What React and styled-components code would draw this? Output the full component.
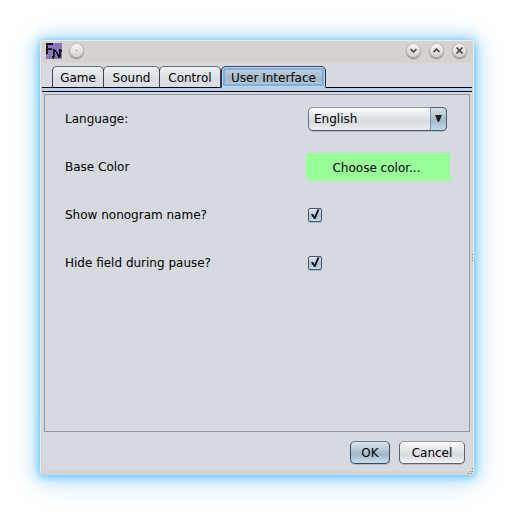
import React, { useState } from "react";
import styled, { createGlobalStyle, css } from "styled-components";

const GlobalStyle = createGlobalStyle`
  *, *::before, *::after { box-sizing: border-box; }
  body {
    margin: 0;
    background: #fff;
    color: #000;
    font: 12px/16px "DejaVu Sans", sans-serif;
  }
  button, select, input { font: inherit; color: inherit; }
`;

const Desktop = styled.div`
  display: flex;
  min-height: 100vh;
  padding: 40px;
`;

const Window = styled.main`
  position: relative;
  display: flex;
  flex: 1;
  flex-direction: column;
  min-width: 0;
  padding: 0 2px 4px;
  border-radius: 4px;
  background: #d6d2d0;
  box-shadow:
    inset 1px 1px 0 #eceae9,
    inset -1px 0 0 #eceae9,
    0 1px 6px #62caff,
    0 1px 14px 2px rgba(105, 200, 255, 0.65),
    0 3px 28px 5px rgba(130, 185, 255, 0.35);
`;

const TitleBar = styled.header`
  display: flex;
  align-items: flex-start;
  height: 23px;
  padding: 3px 5px 0 4px;
`;

const Logo = styled.svg`
  width: 16px;
  height: 16px;
  margin-right: 7px;
`;

const WindowControls = styled.div`
  display: flex;
  gap: 8px;
  margin-left: auto;
`;

const RoundButton = styled.button`
  width: 15px;
  height: 15px;
  padding: 0;
  border: 0;
  border-radius: 50%;
  background: linear-gradient(#fbfbfa, #cfccca);
  box-shadow:
    inset 0 0 0 1px rgba(120, 116, 113, 0.4),
    0 1px 1px rgba(60, 56, 54, 0.55);

  svg {
    display: block;
    width: 15px;
    height: 15px;
    fill: none;
    stroke: #3b3a39;
    stroke-width: 1.5;
  }
`;

const Content = styled.div`
  display: flex;
  flex: 1;
  flex-direction: column;
  background: #d6d9df;
`;

const TabList = styled.div`
  display: flex;
  height: 25px;
  padding: 3px 10px 0;
  background: linear-gradient(#00000f, #00000f) bottom / 100% 1px no-repeat;
`;

const Tab = styled.button`
  flex: 0 0 ${({ $width }) => $width}px;
  height: 22px;
  padding: 2px 0 0;
  margin-right: -1px;
  border: 1px solid #3d424c;
  border-top-color: #6d7177;
  border-bottom-color: #00000f;
  border-radius: 5px 5px 0 0;
  background: linear-gradient(#f0f1f3, #dcdfe4 50%, #d9dce2);
  white-space: nowrap;

  ${({ $active }) =>
    $active &&
    css`
      margin-left: 1px;
      border-color: #1e2c3c;
      border-top-color: #34485c;
      border-bottom-color: #b6d0e6;
      background: linear-gradient(#ccd7e1, #a5bacb 50%, #a3b9cb 65%, #b9d3e8);
      box-shadow: inset 0 0 0 1px #c6d6e5, inset 0 0 0 3px #7dace0;
    `}
`;

const TabStrip = styled.div`
  height: 4px;
  border-bottom: 1px solid #00000f;
  background: #bad2e6;
`;

const Panel = styled.section`
  flex: 1;
  margin: 2px 2px 0;
  padding: 0 17px 0 20px;
  border: 1px solid #8f98a1;
`;

const Row = styled.div`
  display: grid;
  grid-template-columns: minmax(0, 243px) minmax(144px, 1fr);
  align-items: center;
  height: 48px;
`;

const ComboFrame = styled.div`
  position: relative;
  width: 139px;
`;

const Combo = styled.select`
  display: block;
  width: 100%;
  height: 24px;
  padding: 0 20px 0 5px;
  appearance: none;
  border: 1px solid #6d737b;
  border-top-color: #92979d;
  border-bottom-color: #4f555d;
  border-radius: 5px;
  background: linear-gradient(#fafafb, #dcdfe4 50%, #d6d9df 60%, #eceef1);
  box-shadow: 0 1px 0 #b4b8c0;
`;

const ComboArrow = styled.svg`
  position: absolute;
  top: 0;
  right: 0;
  width: 17px;
  height: 24px;
  border: 1px solid #4a6073;
  border-left-color: #7b94aa;
  border-radius: 0 5px 5px 0;
  background: linear-gradient(#d5dfe7, #a3b8ca 55%, #c2dbee);
  pointer-events: none;
`;

const ColorButton = styled.button`
  width: 144px;
  height: 28px;
  margin-left: -2px;
  padding: 1px 3px 0 0;
  border: 0;
  background: #99ff99;
`;

const CheckFrame = styled.span`
  position: relative;
  display: flex;
  width: 14px;
  height: 14px;

  svg {
    position: absolute;
    inset: 0;
    fill: #000;
    pointer-events: none;
  }

  input:not(:checked) + svg { display: none; }
`;

const Check = styled.input`
  width: 14px;
  height: 14px;
  margin: 0;
  appearance: none;
  border: 1px solid #40566a;
  border-radius: 2px;
  background: linear-gradient(#e2eaf0, #abc0d0 60%, #c4dff2);
  box-shadow: 0 1px 0 #b4b8c0;
`;

const Footer = styled.footer`
  display: flex;
  justify-content: flex-end;
  gap: 9px;
  padding: 9px 7px 7px;
`;

const DialogButton = styled.button`
  min-width: ${({ $width }) => $width}px;
  height: 23px;
  padding: 0 8px;
  border: 1px solid #5c6067;
  border-top-color: #94989d;
  border-radius: 5px;
  background: linear-gradient(#fbfbfc, #dee0e4 50%, #d6d9df 60%, #f1f2f4);
  box-shadow: 0 1px 0 #b4b8c0;

  ${({ $primary }) =>
    $primary &&
    css`
      border-color: #34485a;
      border-top-color: #62798c;
      background: linear-gradient(#dce4eb, #b0c2d0 45%, #a3b8ca 60%, #c5dff2);
    `}
`;

const EdgeGrip = styled.svg`
  position: absolute;
  top: calc(50% - 4px);
  right: 1px;
  fill: #817e7c;
`;

const CornerGrip = styled.svg`
  position: absolute;
  right: 0;
  bottom: 1px;
  fill: #817e7c;
`;

const LOGO_PIXELS = [
  "#######.........",
  "#######.........",
  "##..............",
  "##..............",
  "##..............",
  "######..........",
  "######.##....##.",
  "##.....###...###",
  "##.....####..###",
  "##.....##.##.##.",
  "##.....##.##.##.",
  ".......##..####.",
  ".......##..####.",
  "......###...###.",
  "......##....##..",
  ".......#........",
];

const TABS = [
  { name: "Game", width: 52 },
  { name: "Sound", width: 57 },
  { name: "Control", width: 62 },
  { name: "User Interface", width: 105 },
];

function AppLogo() {
  return (
    <Logo viewBox="0 0 16 16" shapeRendering="crispEdges" aria-hidden="true">
      <rect width="16" height="16" fill="#8878b8" />
      {LOGO_PIXELS.map((line, y) =>
        [...line].map(
          (cell, x) =>
            cell === "#" && (
              <rect
                key={`${x}-${y}`}
                x={x}
                y={y}
                width="1"
                height="1"
                fill={x % 3 === 2 || y % 3 === 2 ? "#241d38" : "#030206"}
              />
            )
        )
      )}
    </Logo>
  );
}

function CheckBox({ id }) {
  return (
    <CheckFrame>
      <Check type="checkbox" id={id} defaultChecked />
      <svg viewBox="0 0 14 14" width="14" height="14" aria-hidden="true">
        <path d="M3 6h2l1.5 2.5L9.5 1.5h2L7.4 11H6z" />
      </svg>
    </CheckFrame>
  );
}

export default function App() {
  const [active, setActive] = useState("User Interface");
  return (
    <>
      <GlobalStyle />
      <Desktop>
        <Window>
          <TitleBar>
            <AppLogo />
            <RoundButton aria-label="Window menu">
              <svg viewBox="0 0 15 15">
                <rect x="7" y="7" width="1" height="1" fill="#777" stroke="none" />
              </svg>
            </RoundButton>
            <WindowControls>
              <RoundButton aria-label="Minimize">
                <svg viewBox="0 0 15 15"><path d="M4.5 6l3 3 3-3" /></svg>
              </RoundButton>
              <RoundButton aria-label="Maximize">
                <svg viewBox="0 0 15 15"><path d="M4.5 9l3-3 3 3" /></svg>
              </RoundButton>
              <RoundButton aria-label="Close">
                <svg viewBox="0 0 15 15"><path d="M4.5 4.5l6 6M10.5 4.5l-6 6" /></svg>
              </RoundButton>
            </WindowControls>
          </TitleBar>
          <Content>
            <TabList role="tablist">
              {TABS.map(({ name, width }) => (
                <Tab
                  key={name}
                  role="tab"
                  aria-selected={name === active}
                  $active={name === active}
                  $width={width}
                  onClick={() => setActive(name)}
                >
                  {name}
                </Tab>
              ))}
            </TabList>
            <TabStrip />
            <Panel role="tabpanel">
              <Row>
                <label htmlFor="language">Language:</label>
                <ComboFrame>
                  <Combo id="language">
                    <option>English</option>
                  </Combo>
                  <ComboArrow viewBox="0 0 15 22" aria-hidden="true">
                    <path d="M4 7h7L8 14H7z" fill="#1c1f24" />
                  </ComboArrow>
                </ComboFrame>
              </Row>
              <Row>
                <label htmlFor="base-color">Base Color</label>
                <ColorButton id="base-color">Choose color...</ColorButton>
              </Row>
              <Row>
                <label htmlFor="show-name">Show nonogram name?</label>
                <CheckBox id="show-name" />
              </Row>
              <Row>
                <label htmlFor="hide-field">Hide field during pause?</label>
                <CheckBox id="hide-field" />
              </Row>
            </Panel>
            <Footer>
              <DialogButton $primary $width={40}>OK</DialogButton>
              <DialogButton $width={66}>Cancel</DialogButton>
            </Footer>
          </Content>
          <EdgeGrip width="1" height="7" aria-hidden="true">
            <path d="M0 0h1v1H0zM0 3h1v1H0zM0 6h1v1H0z" />
          </EdgeGrip>
          <CornerGrip width="7" height="6" aria-hidden="true">
            <path d="M5 0h1v1H5zM5 3h1v1H5zM3 3h1v1H3zM4 5h1v1H4zM1 5h1v1H1z" />
          </CornerGrip>
        </Window>
      </Desktop>
    </>
  );
}
